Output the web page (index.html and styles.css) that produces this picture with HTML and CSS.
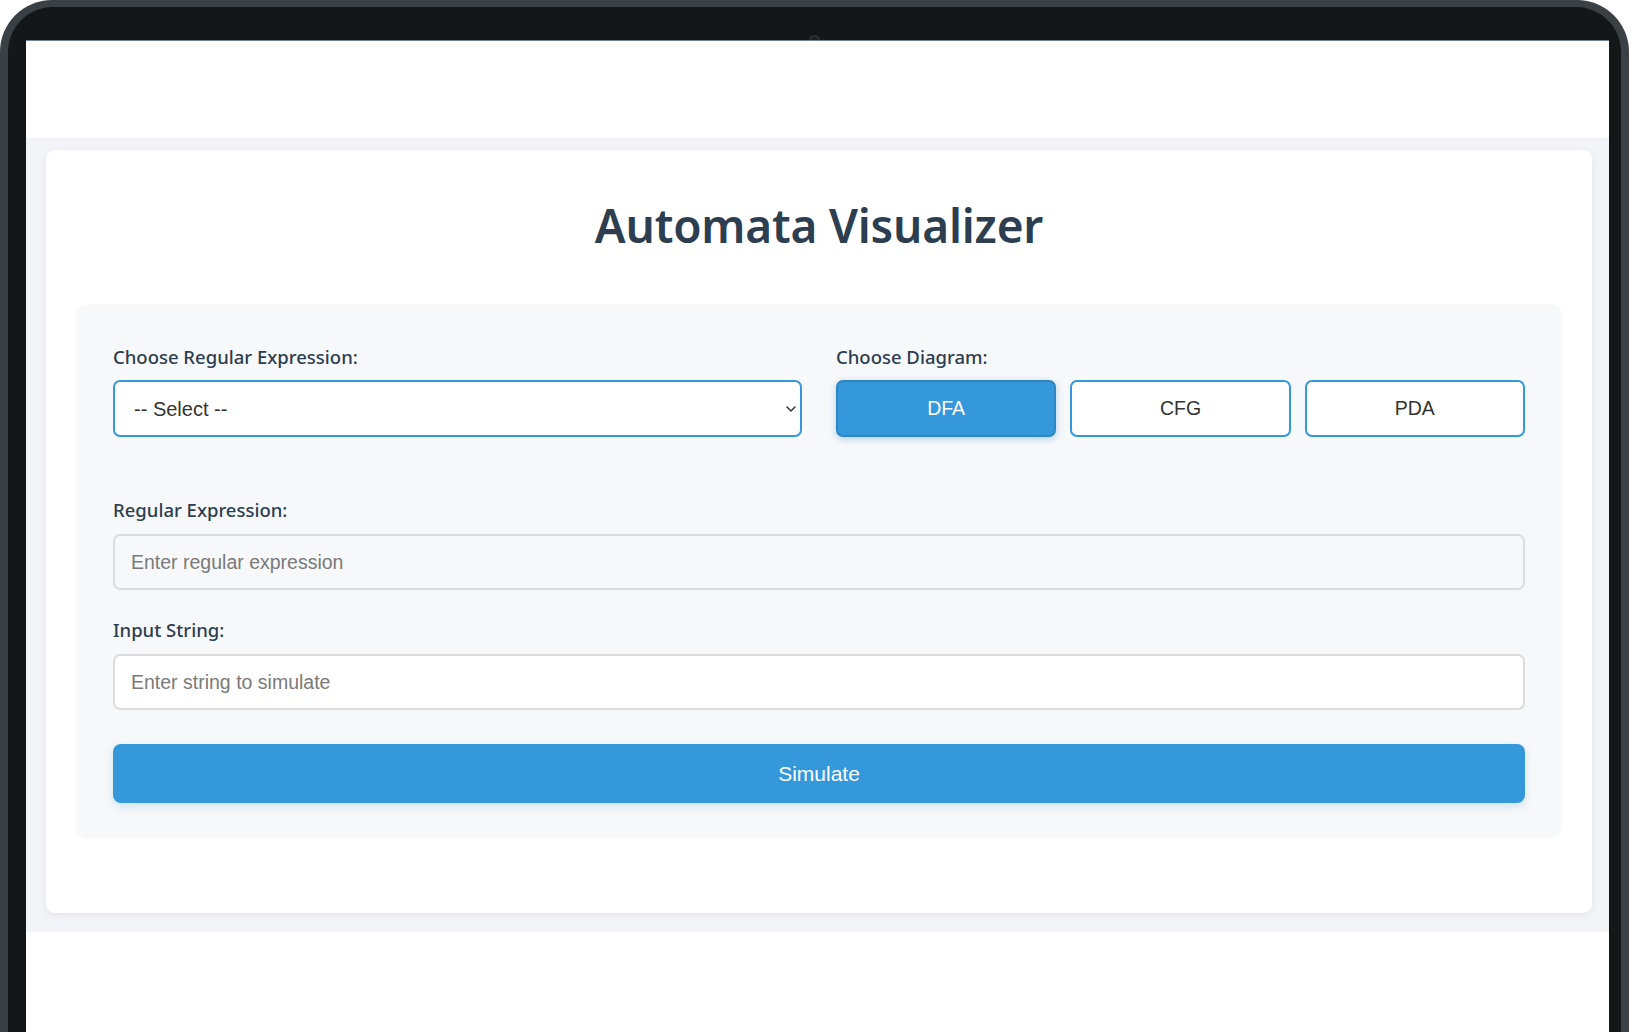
FILE: index.html
```html
<!DOCTYPE html>
<html lang="en">
<head>
<meta charset="utf-8">
<title>Automata Visualizer</title>
<link rel="stylesheet" href="styles.css">
</head>
<body>
<div class="device">
  <div class="bezel">
    <span class="camera"></span>
    <div class="screen">
      <div class="topbar"></div>
      <main class="band">
        <section class="card">
          <h1 class="title">Automata Visualizer</h1>
          <div class="panel">
            <div class="row">
              <div class="field">
                <label class="label" for="re-select">Choose Regular Expression:</label>
                <div class="select-wrap">
                  <select id="re-select" class="select">
                    <option>-- Select --</option>
                  </select>
                  <svg class="chevron" width="10" height="6" viewBox="0 0 10 6" aria-hidden="true">
                    <path d="M1 1l4 4 4-4" fill="none" stroke="#333" stroke-width="1.5" stroke-linecap="round" stroke-linejoin="round"/>
                  </svg>
                </div>
              </div>
              <div class="field">
                <span class="label">Choose Diagram:</span>
                <div class="diagram-buttons">
                  <button class="diag diag-active" type="button">DFA</button>
                  <button class="diag" type="button">CFG</button>
                  <button class="diag" type="button">PDA</button>
                </div>
              </div>
            </div>
            <div class="group group-regex">
              <label class="label" for="regex">Regular Expression:</label>
              <input id="regex" class="input input-muted" type="text" placeholder="Enter regular expression">
            </div>
            <div class="group group-string">
              <label class="label" for="str">Input String:</label>
              <input id="str" class="input" type="text" placeholder="Enter string to simulate">
            </div>
            <button class="simulate" type="button">Simulate</button>
          </div>
        </section>
      </main>
    </div>
  </div>
</div>
</body>
</html>
```
FILE: styles.css
```css
* { box-sizing: border-box; }

html, body {
  margin: 0;
  padding: 0;
  width: 1629px;
  height: 1032px;
  overflow: hidden;
  background: #ffffff;
}

body {
  font-family: "Noto Sans", "Open Sans", Arial, sans-serif;
}

.device {
  width: 1629px;
  height: 1032px;
  background: #3a4043;
  border-radius: 52px 52px 0 0;
  padding: 7px 8px 0 8px;
}

.bezel {
  position: relative;
  height: 100%;
  background: #131718;
  border-radius: 45px 45px 0 0;
  padding: 33px 12px 0 18px;
}

.camera {
  position: absolute;
  top: 28px;
  left: 801px;
  width: 11px;
  height: 11px;
  border-radius: 50%;
  background: #1b1f21;
  border: 2px solid #2a2f32;
}

.screen {
  position: relative;
  height: 100%;
  background: #ffffff;
  border-top: 1px solid #6f8394;
}

.topbar {
  height: 97px;
  background: #ffffff;
}

.band {
  display: block;
  background: #f3f4f8;
  padding: 12px 17px 19px 20px;
}

.card {
  background: #ffffff;
  border-radius: 9px;
  box-shadow: 0 2px 8px rgba(0, 0, 0, 0.07);
  padding: 32px 31px 77px 31px;
}

.title {
  margin: 16px 0 52px 0;
  text-align: center;
  font-family: "Noto Sans", "Open Sans", sans-serif;
  font-weight: 600;
  font-size: 46px;
  line-height: 55px;
  color: #2c3e50;
  letter-spacing: -0.2px;
}

.panel {
  background: #f7f8fa;
  border-radius: 9px;
  box-shadow: 0 1px 5px rgba(0, 0, 0, 0.05);
  padding: 40px 36px 33px 36px;
}

.row {
  display: grid;
  grid-template-columns: 1fr 1fr;
  column-gap: 34px;
}

.field {
  display: flex;
  flex-direction: column;
}

.label {
  display: block;
  font-family: "Noto Sans", "Open Sans", sans-serif;
  font-weight: 500;
  font-size: 18.5px;
  line-height: 24px;
  color: #2c3e50;
  margin-bottom: 11px;
}

.select-wrap {
  position: relative;
}

.select {
  display: block;
  width: 100%;
  height: 57px;
  appearance: none;
  -webkit-appearance: none;
  background: #ffffff;
  border: 2px solid #3498db;
  border-radius: 7px;
  padding: 0 30px 0 19px;
  font-family: "Liberation Sans", Arial, sans-serif;
  font-size: 20px;
  color: #333333;
  outline: none;
}

.chevron {
  position: absolute;
  right: 6px;
  top: 26px;
}

.diagram-buttons {
  display: grid;
  grid-template-columns: 1fr 1fr 1fr;
  column-gap: 14px;
}

.diag {
  height: 57px;
  background: #ffffff;
  border: 2px solid #3498db;
  border-radius: 7px;
  font-family: "Liberation Sans", Arial, sans-serif;
  font-size: 19.5px;
  color: #333333;
  padding: 0;
  cursor: pointer;
}

.diag-active {
  background: #3498db;
  border-color: #2e86c1;
  color: #ffffff;
  box-shadow: 0 2px 7px rgba(41, 128, 185, 0.35);
}

.group-regex {
  margin-top: 61px;
}

.group-string {
  margin-top: 28px;
}

.group .label {
  margin-bottom: 12px;
}

.input {
  display: block;
  width: 100%;
  height: 56px;
  background: #ffffff;
  border: 2px solid #dcdcdc;
  border-radius: 7px;
  padding: 0 16px;
  font-family: "Liberation Sans", Arial, sans-serif;
  font-size: 19.5px;
  color: #333333;
  outline: none;
}

.input::placeholder {
  color: #7a7a7a;
}

.input-muted {
  background: #f7f8fa;
}

.simulate {
  display: block;
  width: 100%;
  height: 59px;
  margin-top: 34px;
  background: #3498db;
  border: none;
  border-radius: 8px;
  box-shadow: 0 3px 8px rgba(52, 152, 219, 0.22);
  font-family: "Liberation Sans", Arial, sans-serif;
  font-size: 21px;
  color: #ffffff;
  cursor: pointer;
}
```
